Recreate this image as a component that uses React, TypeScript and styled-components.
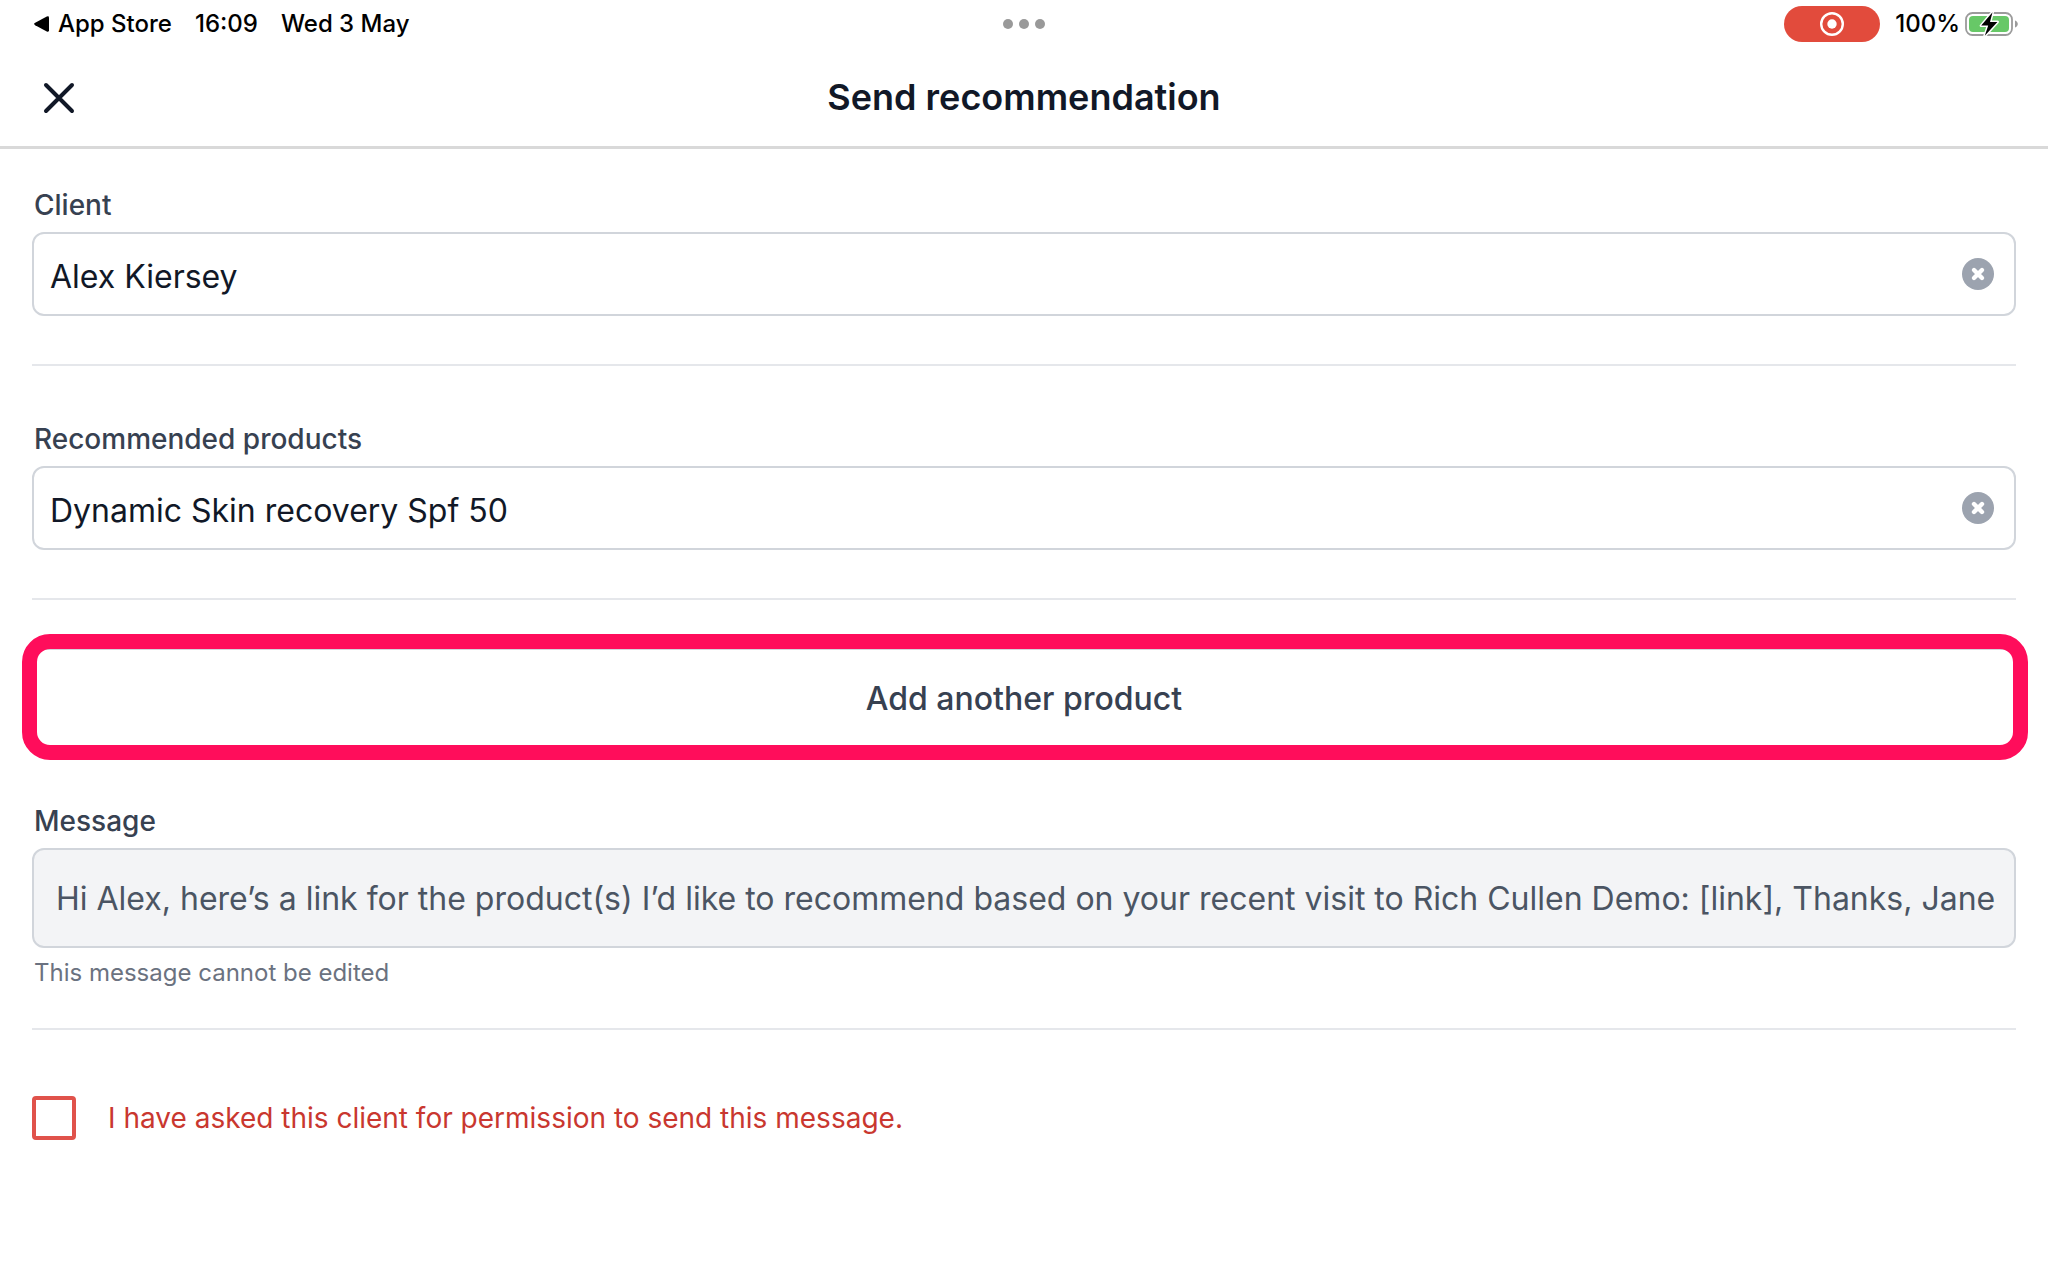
import React, { useState } from "react";
import styled, { createGlobalStyle } from "styled-components";

const GlobalStyle = createGlobalStyle`
  *, *::before, *::after { box-sizing: border-box; }
  body {
    margin: 0;
    background: #fff;
    color: #111827;
    font-family: Inter, "Liberation Sans", sans-serif;
  }
  button, input { font: inherit; color: inherit; }
`;

const StatusBar = styled.div`
  display: grid;
  grid-template-columns: 1fr auto 1fr;
  align-items: center;
  height: 48px;
  padding: 0 29px;
  color: #000;
  font-size: 24px;
  font-weight: 500;
  line-height: 32px;
`;

const StatusGroup = styled.div<{ $end?: boolean }>`
  display: flex;
  align-items: center;
  justify-content: ${(p) => (p.$end ? "flex-end" : "flex-start")};
  gap: ${(p) => (p.$end ? "5px" : "23px")};
  padding-left: 4px;
`;

const BackLink = styled.a`
  display: flex;
  align-items: center;
  gap: 8px;
  color: inherit;
  text-decoration: none;
`;

const Multitask = styled.button`
  display: flex;
  padding: 0;
  border: 0;
  background: none;
`;

const RecordingPill = styled.div`
  display: flex;
  align-items: center;
  justify-content: center;
  width: 96px;
  height: 36px;
  margin-right: 10px;
  border-radius: 18px;
  background: #e24b3c;
`;

const Header = styled.header`
  display: grid;
  grid-template-columns: 1fr auto 1fr;
  align-items: center;
  height: 101px;
  padding: 0 40px;
  border-bottom: 3px solid #d9d9d9;
`;

const Title = styled.h1`
  margin: 0;
  font-size: 36px;
  font-weight: 600;
  line-height: 44px;
`;

const CloseButton = styled.button`
  display: flex;
  justify-self: start;
  padding: 0;
  border: 0;
  background: none;
`;

const Form = styled.form`
  padding: 35px 32px 64px;
`;

const Label = styled.label`
  display: block;
  margin-bottom: 6px;
  padding-left: 2px;
  color: #374151;
  font-size: 28px;
  font-weight: 500;
  line-height: 42px;
`;

const Field = styled.div`
  display: flex;
  align-items: center;
  height: 84px;
  padding-right: 20px;
  border: 2px solid #d1d5db;
  border-radius: 12px;
  background: #fff;
`;

const FieldInput = styled.input`
  flex: 1;
  min-width: 0;
  height: 80px;
  padding: 4px 16px 0;
  border: 0;
  outline: 0;
  background: none;
  font-size: 32px;
`;

const ClearButton = styled.button`
  display: flex;
  padding: 0;
  border: 0;
  background: none;
`;

const MessageInput = styled.input`
  display: block;
  width: 100%;
  height: 100px;
  padding: 0 16px 0 22px;
  border: 2px solid #d1d5db;
  border-radius: 12px;
  outline: 0;
  background: #f3f4f6;
  color: #4b5563;
  font-size: 32px;
`;

const Hint = styled.p`
  margin: 8px 0 38px;
  padding-left: 2px;
  color: #6b7280;
  font-size: 24px;
  line-height: 34px;
`;

const Divider = styled.hr<{ $before?: number; $after: number }>`
  height: 2px;
  margin: ${(p) => p.$before ?? 0}px 0 ${(p) => p.$after}px;
  border: 0;
  background: #e5e7eb;
`;

const AddButton = styled.button`
  position: relative;
  display: block;
  width: 100%;
  height: 100px;
  margin-bottom: 52px;
  border: 2px solid #d1d5db;
  border-radius: 12px;
  background: #fff;
  color: #374151;
  font-size: 32px;
  font-weight: 500;

  &::after {
    content: "";
    position: absolute;
    inset: -16px -14px -14px -12px;
    border: 15px solid #ff0d5b;
    border-radius: 28px;
  }
`;

const Consent = styled.label`
  display: flex;
  align-items: center;
  gap: 32px;
  color: #c9372f;
  font-size: 28px;
  line-height: 44px;
`;

const Checkbox = styled.input`
  appearance: none;
  width: 44px;
  height: 44px;
  margin: 0;
  border: 4px solid #e0524b;
  border-radius: 4px;
  background: #fff;

  &:checked {
    background: #e0524b;
  }
`;

function ClearableField({ id, label, initial }: { id: string; label: string; initial: string }) {
  const [value, setValue] = useState(initial);
  return (
    <div>
      <Label htmlFor={id}>{label}</Label>
      <Field>
        <FieldInput id={id} value={value} onChange={(e) => setValue(e.target.value)} />
        <ClearButton type="button" aria-label={`Clear ${label}`} onClick={() => setValue("")}>
          <svg width="32" height="32" viewBox="0 0 32 32">
            <circle cx="16" cy="16" r="16" fill="#9ca3af" />
            <path d="M12 12l8 8M20 12l-8 8" stroke="#fff" strokeWidth="4.4" strokeLinecap="round" />
          </svg>
        </ClearButton>
      </Field>
    </div>
  );
}

function Battery() {
  return (
    <svg width="54" height="26" viewBox="0 0 54 26" aria-label="Charging">
      <rect x="1" y="2" width="46" height="22" rx="6.5" fill="#fff" stroke="#9b9b9b" strokeWidth="1.8" />
      <rect x="4" y="5" width="40" height="16" rx="4" fill="#67c867" />
      <path d="M50 9.5c1.8.6 2.8 2 2.8 3.5s-1 2.9-2.8 3.5z" fill="#9b9b9b" />
      <path
        d="M27.5 1.2 16.2 14.600h7l-3.400 10.200 12.600-13.900h-7.400z"
        fill="#000"
        stroke="#fff"
        strokeWidth="3"
        strokeLinejoin="round"
        paintOrder="stroke"
      />
    </svg>
  );
}

export default function App() {
  const [allowed, setAllowed] = useState(false);
  return (
    <>
      <GlobalStyle />
      <StatusBar>
        <StatusGroup>
          <BackLink href="#">
            <svg width="17" height="18" viewBox="0 0 17 18">
              <path d="M2.2 7.8 13.8 1.6Q16 .7 16 2.8V15.2Q16 17.3 13.8 16.4L2.2 10.2Q0 9 2.2 7.8z" fill="#000" />
            </svg>
            App Store
          </BackLink>
          <span>16:09</span>
          <span>Wed 3 May</span>
        </StatusGroup>
        <Multitask type="button" aria-label="Multitasking">
          <svg width="42" height="10" viewBox="0 0 42 10" fill="#999">
            <circle cx="5" cy="5" r="5" />
            <circle cx="21" cy="5" r="5" />
            <circle cx="37" cy="5" r="5" />
          </svg>
        </Multitask>
        <StatusGroup $end>
          <RecordingPill>
            <svg width="24" height="24" viewBox="0 0 24 24">
              <circle cx="12" cy="12" r="10.8" fill="none" stroke="#fff" strokeWidth="2.4" />
              <circle cx="12" cy="12" r="4.7" fill="#fff" />
            </svg>
          </RecordingPill>
          <span>100%</span>
          <Battery />
        </StatusGroup>
      </StatusBar>

      <Header>
        <CloseButton type="button" aria-label="Close">
          <svg width="38" height="38" viewBox="0 0 38 38">
            <path d="M6 7l26 26M32 7L6 33" stroke="#111827" strokeWidth="4" strokeLinecap="round" />
          </svg>
        </CloseButton>
        <Title>Send recommendation</Title>
      </Header>

      <Form onSubmit={(e) => e.preventDefault()}>
        <ClearableField id="client" label="Client" initial="Alex Kiersey" />
        <Divider $before={48} $after={52} />
        <ClearableField id="products" label="Recommended products" initial="Dynamic Skin recovery Spf 50" />
        <Divider $before={48} $after={48} />
        <AddButton type="button">Add another product</AddButton>
        <Label htmlFor="message">Message</Label>
        <MessageInput
          id="message"
          readOnly
          aria-describedby="message-hint"
          value="Hi Alex, here’s a link for the product(s) I’d like to recommend based on your recent visit to Rich Cullen Demo: [link], Thanks, Jane"
        />
        <Hint id="message-hint">This message cannot be edited</Hint>
        <Divider $after={66} />
        <Consent>
          <Checkbox type="checkbox" checked={allowed} onChange={(e) => setAllowed(e.target.checked)} />
          I have asked this client for permission to send this message.
        </Consent>
      </Form>
    </>
  );
}
